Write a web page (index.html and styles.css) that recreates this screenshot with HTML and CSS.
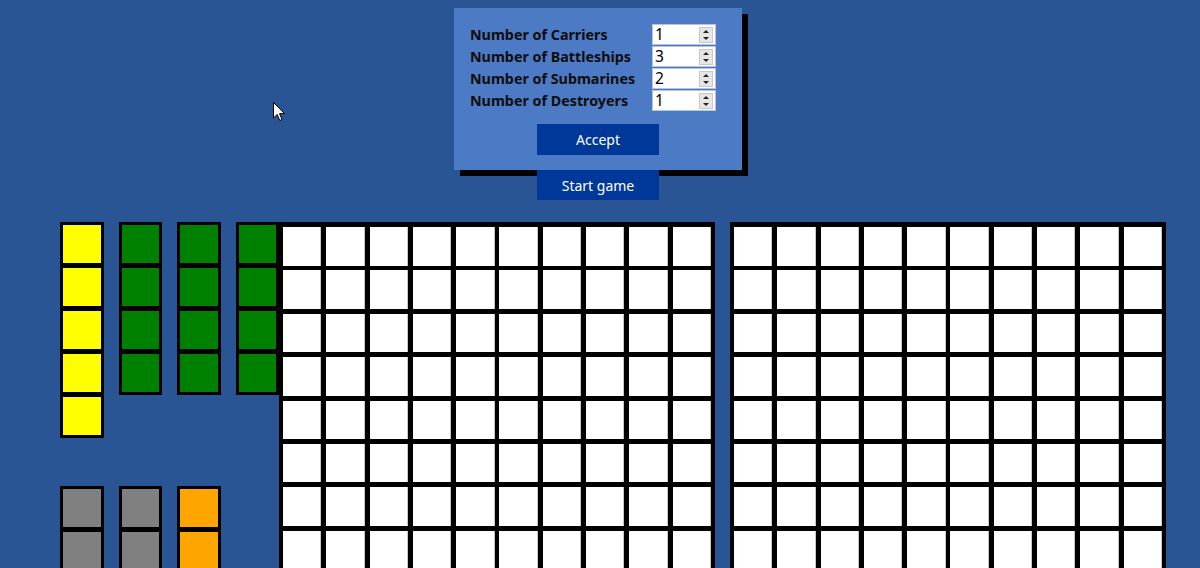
FILE: index.html
```html
<!DOCTYPE html>
<html>
<head>
<meta charset="utf-8">
<link rel="stylesheet" href="styles.css">
</head>
<body>
<div class="top">
  <div class="panel">
    <div class="form">
      <div class="label">Number of Carriers</div>
      <div class="spin"><span class="val">1</span><span class="arrows"><i class="up"></i><i class="down"></i></span></div>
      <div class="label">Number of Battleships</div>
      <div class="spin"><span class="val">3</span><span class="arrows"><i class="up"></i><i class="down"></i></span></div>
      <div class="label">Number of Submarines</div>
      <div class="spin"><span class="val">2</span><span class="arrows"><i class="up"></i><i class="down"></i></span></div>
      <div class="label">Number of Destroyers</div>
      <div class="spin"><span class="val">1</span><span class="arrows"><i class="up"></i><i class="down"></i></span></div>
    </div>
    <div class="btn accept">Accept</div>
  </div>
  <div class="btn start">Start game</div>
</div>

<div class="main">
  <div class="pieces">
    <div class="group">
      <div class="ship"><div class="c yellow"></div><div class="c yellow"></div><div class="c yellow"></div><div class="c yellow"></div><div class="c yellow"></div></div>
      <div class="ship"><div class="c green"></div><div class="c green"></div><div class="c green"></div><div class="c green"></div></div>
      <div class="ship"><div class="c green"></div><div class="c green"></div><div class="c green"></div><div class="c green"></div></div>
      <div class="ship"><div class="c green"></div><div class="c green"></div><div class="c green"></div><div class="c green"></div></div>
    </div>
    <div class="group second">
      <div class="ship"><div class="c gray"></div><div class="c gray"></div><div class="c gray"></div></div>
      <div class="ship"><div class="c gray"></div><div class="c gray"></div><div class="c gray"></div></div>
      <div class="ship"><div class="c orange"></div><div class="c orange"></div></div>
    </div>
  </div>
  <div class="board" id="b1"></div>
  <div class="board" id="b2"></div>
</div>

<svg class="cursor" width="13" height="20" viewBox="0 0 13 20"><path d="M0.5 0.5 L0.5 16 L4.2 12.4 L6.8 18.5 L9 17.5 L6.5 11.6 L11.5 11.6 Z" fill="#fff" stroke="#000" stroke-width="1"/></svg>

<script src="script.js"></script>
</body>
</html>
```

FILE: script.js
```js
for (const id of ['b1', 'b2']) {
  const b = document.getElementById(id);
  for (let i = 0; i < 100; i++) {
    const d = document.createElement('div');
    d.className = 'cell';
    b.appendChild(d);
  }
}
```

FILE: styles.css
```css
html, body {
  margin: 0;
  padding: 0;
}
body {
  background: #2a5594;
  width: 1200px;
  height: 568px;
  overflow: hidden;
  font-family: "Noto Sans", "DejaVu Sans", sans-serif;
  position: relative;
}
.top {
  display: flex;
  flex-direction: column;
  align-items: center;
  padding-top: 8px;
  margin-right: 4px;
}
.panel {
  width: 288px;
  height: 162px;
  box-sizing: border-box;
  background: #4d7ac5;
  box-shadow: 6px 6px 0 #000;
  padding: 16px 0 0 16px;
  display: flex;
  flex-direction: column;
}
.form {
  display: grid;
  grid-template-columns: 182px 64px;
  grid-auto-rows: 21px;
  row-gap: 1px;
}
.label {
  font-weight: 700;
  font-size: 14.3px;
  color: #0d0d0d;
  display: flex;
  align-items: center;
}
.spin {
  background: #fff;
  border: 1px solid #b9c3d3;
  box-sizing: border-box;
  display: flex;
  align-items: center;
  justify-content: space-between;
  padding: 0 2px 0 2px;
}
.val {
  font-size: 15.5px;
  color: #000;
  line-height: 1;
}
.arrows {
  width: 14px;
  height: 16px;
  background: #e6e6e6;
  border: 1px solid #c8c8c8;
  box-sizing: border-box;
  display: flex;
  flex-direction: column;
  align-items: center;
  justify-content: space-around;
}
.arrows i {
  width: 0;
  height: 0;
  border-left: 3px solid transparent;
  border-right: 3px solid transparent;
}
.arrows .up { border-bottom: 3px solid #222; }
.arrows .down { border-top: 3px solid #222; }
.btn {
  width: 122px;
  height: 31px;
  background: #00389a;
  color: #fff;
  font-size: 14px;
  display: flex;
  align-items: center;
  justify-content: center;
}
.accept {
  margin-top: 13px;
  margin-left: 67px;
}
.start {
  height: 30px;
}
.main {
  display: flex;
  margin-top: 22px;
  padding-left: 60px;
}
.pieces {
  width: 219px;
  display: flex;
  flex-direction: column;
  gap: 48px;
}
.group {
  display: flex;
  gap: 15px;
  align-items: flex-start;
}
.ship {
  width: 43.5px;
  box-sizing: border-box;
  background: #000;
  padding: 3px;
  display: flex;
  flex-direction: column;
  gap: 5px;
}
.c {
  height: 38px;
}
.yellow { background: #ffff00; }
.green { background: #008000; }
.gray { background: #808080; }
.orange { background: #ffa500; }
.board {
  width: 436px;
  box-sizing: border-box;
  background: #000;
  padding: 5px 4px 4px 4px;
  display: grid;
  grid-template-columns: repeat(10, 1fr);
  grid-auto-rows: 38.5px;
  gap: 4.9px;
}
#b2 {
  margin-left: 15px;
}
.cell {
  background: #fff;
  box-shadow: inset -1px 0 0 #c8c8c8;
}
.cursor {
  position: absolute;
  left: 273px;
  top: 102px;
}
```
